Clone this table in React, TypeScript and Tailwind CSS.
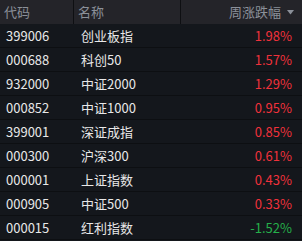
import React from "react";

const rows: [string, string, string, boolean][] = [
  ["399006", "创业板指", "1.98%", true],
  ["000688", "科创50", "1.57%", true],
  ["932000", "中证2000", "1.29%", true],
  ["000852", "中证1000", "0.95%", true],
  ["399001", "深证成指", "0.85%", true],
  ["000300", "沪深300", "0.61%", true],
  ["000001", "上证指数", "0.43%", true],
  ["000905", "中证500", "0.33%", true],
  ["000015", "红利指数", "-1.52%", false],
];

export default function App() {
  return (
    <div
      className="w-[302px] h-[241px] bg-[#14171c] overflow-hidden text-[13px]"
      style={{ fontFamily: '"Noto Sans CJK SC", "Noto Sans", sans-serif' }}
    >
      <div className="flex h-[24px] bg-[#242429] text-[#8b9099] items-center">
        <div className="w-[74px] pl-[4px] border-r border-[#0e0f12] h-full flex items-center">代码</div>
        <div className="w-[107px] pl-[4px] border-r border-[#0e0f12] h-full flex items-center">名称</div>
        <div className="flex-1 flex items-center justify-end pr-[8px] h-full gap-[6px]">
          <span>周涨跌幅</span>
          <svg width="7" height="5" viewBox="0 0 7 5">
            <polygon points="0,0 7,0 3.5,4.5" fill="#8b9099" />
          </svg>
        </div>
      </div>
      {rows.map(([code, name, pct, up]) => (
        <div key={code} className="flex h-[24px] items-center border-b border-[#0d0f12]">
          <div className="w-[74px] pl-[6px] text-[#e8e8e8]">{code}</div>
          <div className="w-[107px] pl-[7px] text-[#e8e8e8]">{name}</div>
          <div className={`flex-1 text-right pr-[10px] ${up ? "text-[#f0313b]" : "text-[#25b04a]"}`}>{pct}</div>
        </div>
      ))}
    </div>
  );
}
